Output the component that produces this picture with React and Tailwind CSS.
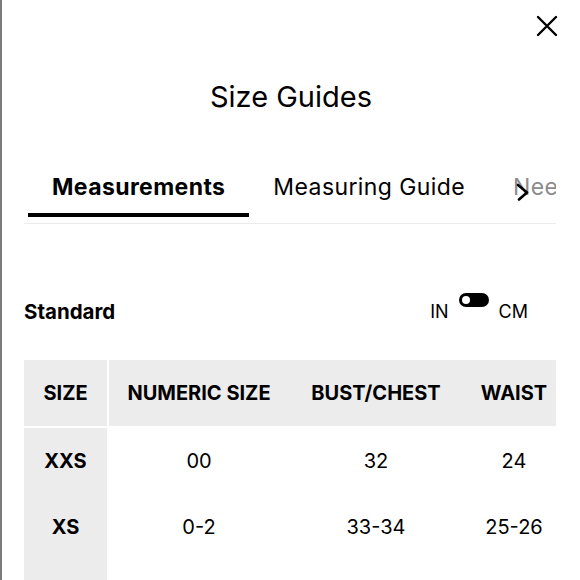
import React, { useState } from "react";

const rows = [
  { size: "XXS", numeric: "00", bust: "32", waist: "24" },
  { size: "XS", numeric: "0-2", bust: "33-34", waist: "25-26" },
  { size: "S", numeric: "4-6", bust: "35-36", waist: "27-28" },
];

const tabs = ["Measurements", "Measuring Guide", "Need Help?"];

const CloseIcon = () => (
  <svg width="22" height="22" viewBox="0 0 22 22" fill="none">
    <path d="M2 2L20 20M20 2L2 20" stroke="#000" strokeWidth="2.4" strokeLinecap="round" />
  </svg>
);

const Chevron = () => (
  <svg width="14" height="18" viewBox="0 0 14 18" fill="none">
    <path d="M2 2L11 9.5L3 16.5" stroke="#000" strokeWidth="2.6" strokeLinecap="round" strokeLinejoin="round" />
  </svg>
);

const App = () => {
  const [activeTab, setActiveTab] = useState(0);
  const [metric, setMetric] = useState(false);

  return (
    <div className="min-h-[580px] bg-white border-l-2 border-[#7b7b7b] font-['Inter',sans-serif] text-black">
      <div className="flex justify-end items-center h-[50px] pr-[22px] pt-[2px]">
        <button type="button" aria-label="Close">
          <CloseIcon />
        </button>
      </div>

      <h1 className="mt-[30px] text-center text-[29px] leading-[34px] font-normal">Size Guides</h1>

      <div className="relative ml-[22px] mr-6 mt-[59px] overflow-hidden border-b border-[#ececec]">
        <div className="flex pl-1 pb-[6px] whitespace-nowrap">
          {tabs.map((tab, i) => (
            <button
              key={tab}
              type="button"
              onClick={() => setActiveTab(i)}
              className="flex flex-col shrink-0"
            >
              <span
                className={`px-6 text-[23px] leading-7 tracking-[0.4px] ${
                  i === activeTab ? "font-bold" : i === 2 ? "text-[#8c8c8c]" : ""
                }`}
              >
                {tab}
              </span>
              <span className={`mt-3 h-1 w-full ${i === activeTab ? "bg-black" : ""}`} />
            </button>
          ))}
        </div>
        <div className="absolute left-[492px] top-[10px]">
          <Chevron />
        </div>
      </div>

      <div className="ml-[22px] mr-6 mt-[69px] flex items-end justify-between">
        <span className="text-[20.5px] leading-7 font-bold">Standard</span>
        <div className="flex items-end mr-7">
          <span className="text-[18px] leading-7">IN</span>
          <button
            type="button"
            onClick={() => setMetric((m) => !m)}
            className={`mx-[10px] mb-[19px] flex h-[14px] w-[30px] items-center rounded-full bg-black px-[3px] ${
              metric ? "justify-end" : "justify-start"
            }`}
          >
            <span className="h-[8px] w-[8px] rounded-full bg-white" />
          </button>
          <span className="text-[18px] leading-7">CM</span>
        </div>
      </div>

      <div className="ml-[22px] mr-6 mt-[34px] overflow-hidden">
        <div className="flex w-[551px] h-[66px] text-[20px] font-bold">
          <div className="flex w-[83px] shrink-0 items-center justify-center bg-[#ececec]">SIZE</div>
          <div className="w-[2px] shrink-0 bg-white" />
          <div className="flex flex-1 bg-[#ececec]">
            <div className="flex w-[180px] items-center justify-center whitespace-nowrap">NUMERIC SIZE</div>
            <div className="flex w-[174px] items-center justify-center whitespace-nowrap">BUST/CHEST</div>
            <div className="flex w-[102px] items-center justify-center">WAIST</div>
          </div>
        </div>
        <div className="mt-[2px]">
          {rows.map((row) => (
            <div key={row.size} className="flex w-[551px] h-[66px] text-[20px]">
              <div className="flex w-[83px] shrink-0 items-center justify-center bg-[#ececec] font-bold">
                {row.size}
              </div>
              <div className="w-[2px] shrink-0" />
              <div className="flex w-[180px] items-center justify-center">{row.numeric}</div>
              <div className="flex w-[174px] items-center justify-center">{row.bust}</div>
              <div className="flex w-[102px] items-center justify-center">{row.waist}</div>
            </div>
          ))}
        </div>
      </div>
    </div>
  );
};

export default App;
